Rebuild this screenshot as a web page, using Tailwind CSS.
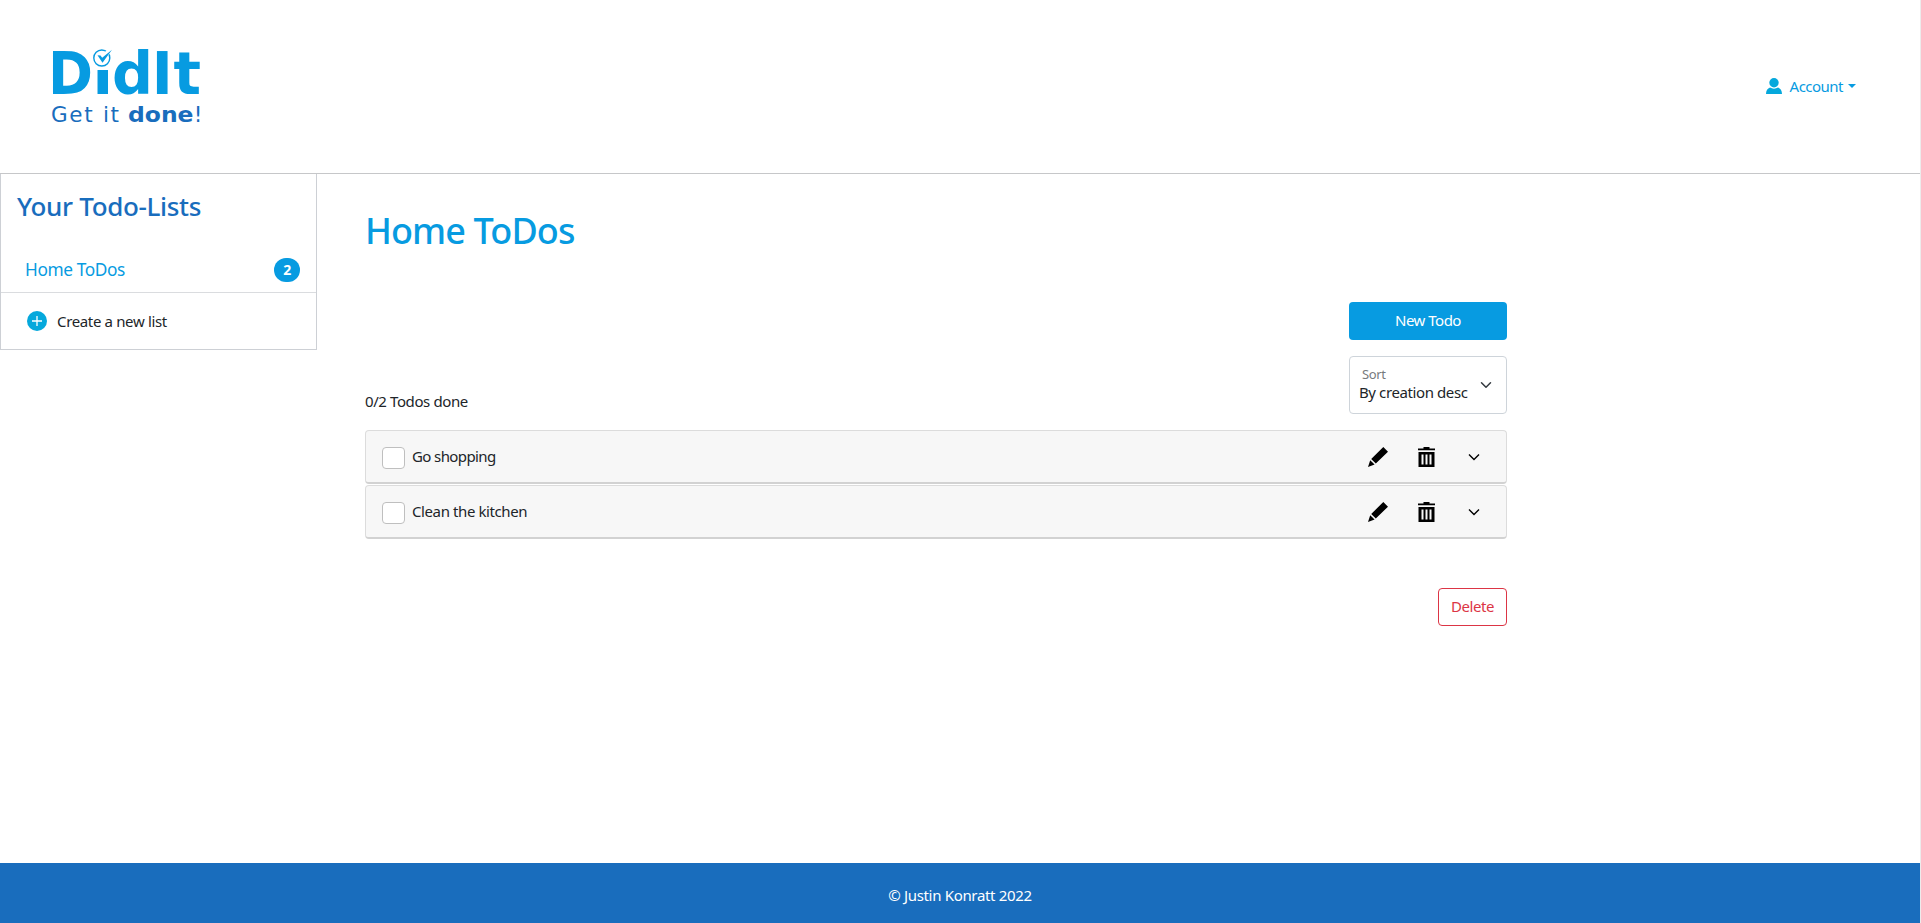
<!DOCTYPE html>
<html lang="en">
<head>
<meta charset="utf-8">
<title>DidIt</title>
<script src="https://cdn.jsdelivr.net/npm/@tailwindcss/browser@4"></script>
</head>
<body class="h-[923px] w-[1921px] overflow-hidden bg-white font-['Noto_Sans',sans-serif] text-[15px] leading-6 tracking-[-0.4px] text-[#212529]">
<svg class="hidden">
  <symbol id="pen" viewBox="0 0 20 20"><path d="M15.300 0 20 4.700 7.800 16.500 3.200 12zM2.200 13.200 6.600 17.500 0 20z"/></symbol>
  <symbol id="trash" viewBox="0 0 17 20"><path d="M5.500 0h6v1.600H17v1.600H0V1.600h5.500z"/><path d="M.5 5h16v15H.5zM3.500 7.500v10h2v-10zM7.500 7.500v10h2v-10zM11.500 7.500v10h2v-10z" fill-rule="evenodd"/></symbol>
  <symbol id="chevron" viewBox="0 0 16 16"><path d="m3 5.500 5 5 5-5" fill="none" stroke="#000" stroke-width="1.400"/></symbol>
</svg>
<div class="flex h-full flex-col border-r border-[#ececec]">
  <header class="flex h-[174px] shrink-0 items-center justify-between border-b border-[#c6c7c9] pr-[64px] pl-[45px]">
    <svg class="h-[90px] w-[165px] overflow-visible" viewBox="45 42 165 90" fill="#079be1">
      <g font-family="DejaVu Sans" font-weight="700" font-size="59.500" letter-spacing="0">
        <text x="48" y="94" textLength="45" lengthAdjust="spacingAndGlyphs">D</text>
        <text x="92.500" y="94" font-size="44" textLength="20.500" lengthAdjust="spacingAndGlyphs">ı</text>
        <text x="112" y="94" textLength="41" lengthAdjust="spacingAndGlyphs">d</text>
        <text x="151.800" y="94" textLength="21" lengthAdjust="spacingAndGlyphs">I</text>
        <text x="173.500" y="94" textLength="27.500" lengthAdjust="spacingAndGlyphs">t</text>
      </g>
      <circle cx="101.800" cy="58" r="8" fill="none" stroke="#079be1" stroke-width="1.400"/>
      <path d="M105.500 54.500 109.500 51" fill="none" stroke="#fff" stroke-width="4.500"/>
      <path d="M97.500 55.300l3 .3 1.700 2.200 9.800-8-9.500 13z"/>
      <g fill="#196dbd" font-family="DejaVu Sans" font-size="21.500" letter-spacing="0">
        <text x="51" y="122.300" textLength="68">Get it</text>
        <text x="128" y="122.300" font-weight="700" textLength="65.500" lengthAdjust="spacingAndGlyphs">done</text>
        <text x="193.700" y="122.300">!</text>
      </g>
    </svg>
    <button class="mb-[2px] flex items-center text-[#079be1]">
      <svg class="mr-2 size-4" viewBox="0 0 16 16" fill="#05a8dc"><circle cx="8" cy="4.700" r="4.700"/><path d="M0 16c0-3.500 1.500-5.500 4-6.500 2.400 1.500 5.600 1.500 8 0 2.500 1 4 3 4 6.500z"/></svg>
      <span class="tracking-[-0.52px]">Account</span>
      <i class="mt-px ml-[5px] border-x-4 border-t-4 border-x-transparent border-t-[#079be1]"></i>
    </button>
  </header>
  <div class="flex grow items-start">
    <aside class="h-[176px] w-[317px] shrink-0 border-x border-b border-[#cdd0d5]">
      <h2 class="h-[68px] pt-[14px] pl-4 text-[26px] leading-9 font-medium tracking-[-0.33px] text-[#196dbd]">Your Todo-Lists</h2>
      <div class="flex h-[51px] items-center justify-between border-b border-[#dadcdf] pt-[5px] pr-4 pl-6 text-[17.3px] text-[#079be1]"><span>Home ToDos</span><b class="flex h-6 w-[26px] items-center justify-center rounded-full bg-[#079be1] text-[14px] text-white">2</b></div>
      <div class="flex h-14 items-center pl-[26px]"><svg class="mr-[10px] size-5" viewBox="0 0 20 20"><circle cx="10" cy="10" r="10" fill="#05a8dc"/><path d="M5 10h10M10 5v10" stroke="#fff" stroke-width="1.300"/></svg><span class="tracking-[-0.35px]">Create a new list</span></div>
    </aside>
    <main class="ml-12 w-[1142px]">
      <h1 class="h-[128px] pt-[33px] text-[36px] leading-[48px] font-medium tracking-[-0.9px] text-[#079be1]">Home ToDos</h1>
      <div class="flex h-[128px] items-end justify-between">
        <p class="h-[41px]">0/2 Todos done</p>
        <div class="flex h-full w-[158px] flex-col gap-4 pb-4">
          <button class="h-[38px] w-full shrink-0 rounded bg-[#079be1] pb-[2px] tracking-[-0.5px] text-white">New Todo</button>
          <div class="flex h-[58px] shrink-0 items-center justify-between rounded border border-[#ced4da] pr-[14px] pl-[9px]">
            <div class="pb-1"><p class="pl-[3px] text-[13px] leading-[18px] text-[#777a7d]">Sort</p><p class="leading-[19px]">By creation desc</p></div>
            <svg class="size-3" viewBox="0 0 16 16" fill="none" stroke="#343a40" stroke-width="2" stroke-linecap="round" stroke-linejoin="round"><path d="m2 5 6 6 6-6"/></svg>
          </div>
        </div>
      </div>
      <ul class="flex flex-col gap-px">
        <li class="flex h-[54px] items-center rounded border border-b-2 border-[#dcdcdc] border-b-[#d2d2d2] bg-[#f7f7f7] pr-6 pl-4">
          <span class="mt-[3px] h-[22px] w-[23px] rounded border border-[#bfbfbf] bg-white"></span>
          <span class="ml-[7px] grow pb-[2px] tracking-[-0.6px]">Go shopping</span>
          <svg class="mr-[30px] size-5"><use href="#pen"/></svg><svg class="mr-[31px] h-5 w-[17px]"><use href="#trash"/></svg><svg class="size-4"><use href="#chevron"/></svg>
        </li>
        <li class="flex h-[54px] items-center rounded border border-b-2 border-[#dcdcdc] border-b-[#d2d2d2] bg-[#f7f7f7] pr-6 pl-4">
          <span class="mt-[3px] h-[22px] w-[23px] rounded border border-[#bfbfbf] bg-white"></span>
          <span class="ml-[7px] grow pb-[2px]">Clean the kitchen</span>
          <svg class="mr-[30px] size-5"><use href="#pen"/></svg><svg class="mr-[31px] h-5 w-[17px]"><use href="#trash"/></svg><svg class="size-4"><use href="#chevron"/></svg>
        </li>
      </ul>
      <div class="mt-[49px] flex justify-end"><button class="h-[38px] w-[69px] rounded border border-[#dc3545] pb-[2px] text-[#dc3545]">Delete</button></div>
    </main>
  </div>
  <footer class="flex h-[60px] shrink-0 items-center justify-center bg-[#196dbd] pt-1 tracking-[-0.32px] text-white">© Justin Konratt 2022</footer>
</div>
</body>
</html>
